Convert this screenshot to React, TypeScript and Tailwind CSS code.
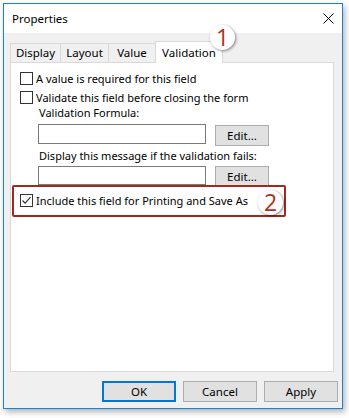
import React from "react";

function Box({ checked = false }: { checked?: boolean }) {
  return (
    <div className="w-[13px] h-[13px] border border-[#333333] bg-white flex items-center justify-center shrink-0">
      {checked && (
        <svg width="11" height="11" viewBox="0 0 11 11">
          <path d="M1.5 5.5 L4.2 8.2 L9.5 2.2" fill="none" stroke="#333" strokeWidth="1.2" />
        </svg>
      )}
    </div>
  );
}

function Btn({ label, primary = false, w = "w-[74px]" }: { label: string; primary?: boolean; w?: string }) {
  return (
    <div
      className={
        primary
          ? `${w} h-[21px] border-2 border-[#0078d7] bg-[#e1e1e1] flex items-center justify-center text-[11.5px] text-black`
          : `${w} h-[21px] border border-[#adadad] bg-[#e1e1e1] flex items-center justify-center text-[11.5px] text-black`
      }
    >
      {label}
    </div>
  );
}

function Badge({ n }: { n: string }) {
  return (
    <div className="w-[25px] h-[25px] rounded-full bg-white shadow-[1px_1px_3px_rgba(0,0,0,0.45)] flex items-center justify-center text-[23px] leading-none text-[#b0301e] [font-family:'Open_Sans',sans-serif]">
      {n}
    </div>
  );
}

export default function App() {
  return (
    <div className="w-[349px] h-[418px] bg-white pt-[3px] pl-[3px] [font-family:'Noto_Sans',sans-serif] text-[11px] text-black">
      <div className="w-[340px] h-[406px] border border-[#1883d7] bg-[#f0f0f0] flex flex-col relative shadow-[2px_3px_6px_rgba(0,0,0,0.3)]">
        <div className="h-[29px] bg-white flex items-center justify-between pl-[8px] pr-[8px]">
          <span className="text-[11.5px]">Properties</span>
          <svg width="11" height="11" viewBox="0 0 11 11">
            <path d="M0.5 0.5 L10.5 10.5 M10.5 0.5 L0.5 10.5" stroke="#000" strokeWidth="1" />
          </svg>
        </div>
        <div className="flex flex-col px-[6px] pt-[8px]">
          <div className="flex items-end h-[21px] text-[11.5px]">
            <div className="w-[51px] h-[19px] border border-b-0 border-[#d9d9d9] flex items-center justify-center">Display</div>
            <div className="w-[49px] h-[19px] -ml-px border border-b-0 border-[#d9d9d9] flex items-center justify-center">Layout</div>
            <div className="w-[48px] h-[19px] -ml-px border border-b-0 border-[#d9d9d9] flex items-center justify-center">Value</div>
            <div className="w-[68px] h-[22px] -ml-px mb-[-1px] border border-b-0 border-[#d9d9d9] bg-white relative z-10 flex items-start pt-[2px] justify-center">Validation</div>
          </div>
          <div className="w-[324px] h-[310px] bg-white border border-[#d9d9d9] relative pt-[9px] pl-[9px] flex flex-col text-[11px]">
            <div className="flex items-center h-[13px]">
              <Box />
              <span className="ml-[3px] leading-[16px]">A value is required for this field</span>
            </div>
            <div className="flex items-center h-[13px] mt-[6px]">
              <Box />
              <span className="ml-[3px] leading-[16px]">Validate this field before closing the form</span>
            </div>
            <div className="pl-[19px] leading-[16px] mt-[1px]">Validation Formula:</div>
            <div className="flex items-start pl-[18px] mt-[3px]">
              <div className="w-[168px] h-[20px] border border-[#7a7a7a] bg-white" />
              <div className="ml-[9px] mt-[1px]">
                <Btn label="Edit..." w="w-[54px]" />
              </div>
            </div>
            <div className="pl-[19px] leading-[16px] mt-[2px]">Display this message if the validation fails:</div>
            <div className="flex items-start pl-[18px] mt-[2px]">
              <div className="w-[168px] h-[19px] border border-[#7a7a7a] bg-white" />
              <div className="ml-[9px]">
                <Btn label="Edit..." w="w-[54px]" />
              </div>
            </div>
            <div className="flex items-center h-[13px] mt-[7px]">
              <Box checked />
              <span className="ml-[3px] leading-[16px]">Include this field for Printing and Save As</span>
            </div>
            <div className="absolute left-[1px] top-[122px] w-[274px] h-[32px] border-2 border-[#a3291d] rounded-[2px]" />
            <div className="absolute left-[247px] top-[127px]">
              <Badge n="2" />
            </div>
          </div>
          <div className="flex justify-end gap-[7px] mt-[9px] mr-[-2px]">
            <Btn label="OK" primary />
            <Btn label="Cancel" />
            <Btn label="Apply" />
          </div>
        </div>
        <div className="absolute left-[206px] top-[21px] z-20">
          <Badge n="1" />
        </div>
      </div>
    </div>
  );
}
